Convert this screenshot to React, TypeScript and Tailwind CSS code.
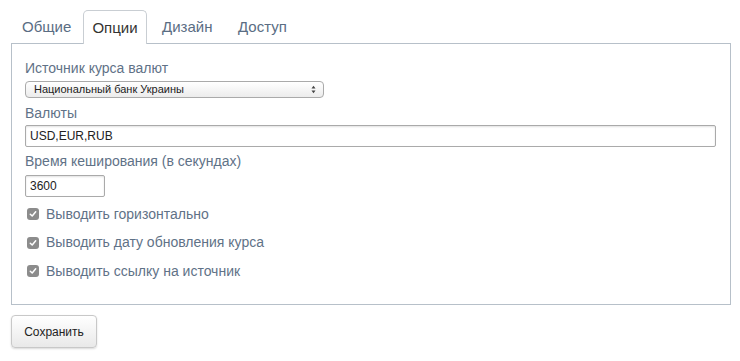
import React from "react";

const font = { fontFamily: '"Liberation Sans", Arial, sans-serif' };

function Check({ label }: { label: string }) {
  return (
    <div className="flex items-center h-[28.5px]">
      <span className="ml-[2px] w-[12px] h-[12px] rounded-[3px] bg-[#8c8c8c] flex items-center justify-center">
        <svg width="8" height="8" viewBox="0 0 8 8">
          <path d="M1.3 4.2 L3.2 6 L6.7 1.8" stroke="#fff" strokeWidth="1.5" fill="none" strokeLinecap="round" strokeLinejoin="round" />
        </svg>
      </span>
      <span className="ml-[7px] text-[14px] text-[#5f7287]">{label}</span>
    </div>
  );
}

export default function App() {
  return (
    <div className="w-[740px] h-[361px] bg-white" style={font}>
      <div className="pt-[10px] px-[11px]">
        <div className="flex h-[33px]">
          <div className="w-[72px] pl-[11px] flex items-center text-[15px] text-[#5a6d83] pt-[2px]">Общие</div>
          <div className="w-[64px] flex items-center justify-center text-[15px] text-[#333] border border-b-0 border-[#c9ced3] rounded-t-[5px] bg-white relative z-10 h-[34px] pt-[2px]">Опции</div>
          <div className="w-[75px] pl-[15px] flex items-center text-[15px] text-[#5a6d83] pt-[2px]">Дизайн</div>
          <div className="pl-[16px] flex items-center text-[15px] text-[#5a6d83] pt-[2px]">Доступ</div>
        </div>
        <div className="w-[720px] h-[262px] border border-[#b7c0c9] pl-[13px] pt-[14px]">
          <div className="text-[14px] leading-[20px] text-[#5f7287]">Источник курса валют</div>
          <div className="mt-[3px] w-[299px] h-[17px] rounded-[4px] border border-[#aaa] bg-gradient-to-b from-white to-[#ececec] flex items-center justify-between pl-[8px] pr-[7px] text-[11px] text-[#222]">
            <span>Национальный банк Украины</span>
            <svg width="5" height="9" viewBox="0 0 5 9">
              <path d="M0.5 3.5 L2.5 0.8 L4.5 3.5 Z M0.5 5.5 L2.5 8.2 L4.5 5.5 Z" fill="#444" />
            </svg>
          </div>
          <div className="mt-[5px] text-[14px] leading-[20px] text-[#5f7287]">Валюты</div>
          <div className="mt-[2px] w-[691px] h-[22px] border border-[#aaa] rounded-[2px] shadow-[inset_0_1px_2px_rgba(0,0,0,0.12)] flex items-center pl-[4px] text-[12px] text-[#222]">USD,EUR,RUB</div>
          <div className="mt-[4px] text-[14px] leading-[20px] text-[#5f7287]">Время кеширования (в секундах)</div>
          <div className="mt-[4px] w-[80px] h-[22px] border border-[#aaa] rounded-[2px] shadow-[inset_0_1px_2px_rgba(0,0,0,0.12)] flex items-center pl-[4px] text-[12px] text-[#222]">3600</div>
          <div className="mt-[3px]">
            <Check label="Выводить горизонтально" />
            <Check label="Выводить дату обновления курса" />
            <Check label="Выводить ссылку на источник" />
          </div>
        </div>
        <button className="mt-[10px] w-[86px] h-[33px] rounded-[4px] border border-[#c8c8c8] bg-gradient-to-b from-white to-[#e9e9e9] shadow-[0_1px_2px_rgba(0,0,0,0.15)] text-[12px] text-[#222]">Сохранить</button>
      </div>
    </div>
  );
}
